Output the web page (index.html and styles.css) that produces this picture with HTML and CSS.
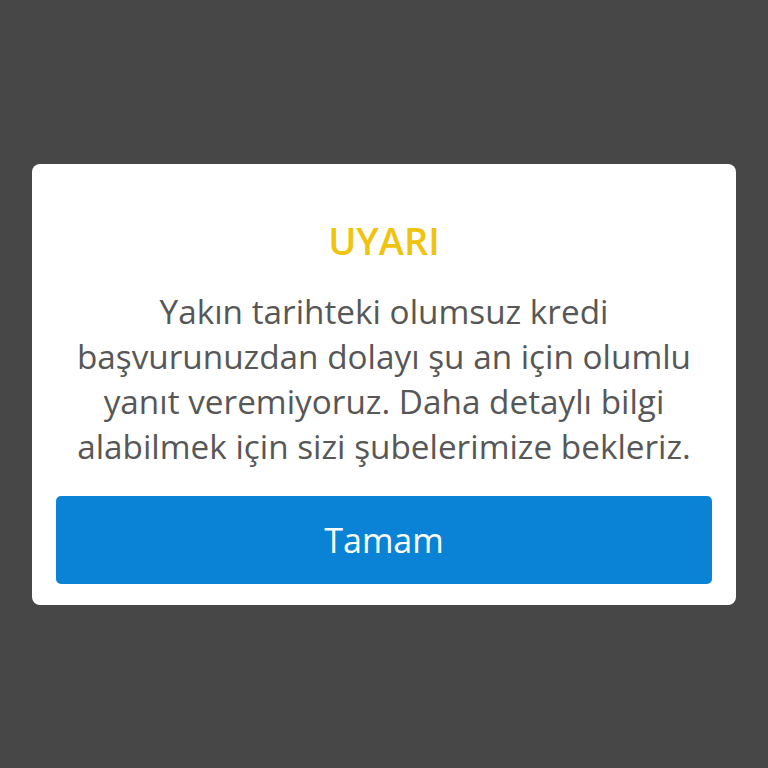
FILE: index.html
```html
<!DOCTYPE html>
<html lang="tr">
<head>
    <meta charset="UTF-8">
    <meta name="viewport" content="width=device-width, initial-scale=1.0">
    <title>Uyarı</title>
    <link rel="stylesheet" href="styles.css">
</head>
<body>

    <div class="overlay">
        <div class="dialog">
            <h2 class="dialog-title">UYARI</h2>
            <p class="dialog-text">Yakın tarihteki olumsuz kredi başvurunuzdan dolayı şu an için olumlu yanıt veremiyoruz. Daha detaylı bilgi alabilmek için sizi şubelerimize bekleriz.</p>
            <button class="dialog-button">Tamam</button>
        </div>
    </div>

</body>
</html>
```

FILE: styles.css
```css
* {
    margin: 0;
    padding: 0;
    box-sizing: border-box;
}

body {
    font-family: 'Open Sans', 'Noto Sans', sans-serif;
    background: #474747;
    width: 768px;
    height: 768px;
    overflow: hidden;
}

.overlay {
    padding: 164px 32px 0 32px;
}

.dialog {
    background: #ffffff;
    border-radius: 8px;
    padding: 50px 24px 21px 24px;
    text-align: center;
}

.dialog-title {
    color: #f0c30f;
    font-size: 38px;
    font-weight: 600;
    line-height: normal;
}

.dialog-text {
    color: #575757;
    font-size: 33.3px;
    line-height: 45px;
    margin-top: 23px;
}

.dialog-button {
    display: block;
    width: 100%;
    height: 88px;
    margin-top: 27px;
    background: #0a83d6;
    border: none;
    border-radius: 5px;
    color: #ffffff;
    font-family: inherit;
    font-size: 34px;
    cursor: pointer;
}
```
